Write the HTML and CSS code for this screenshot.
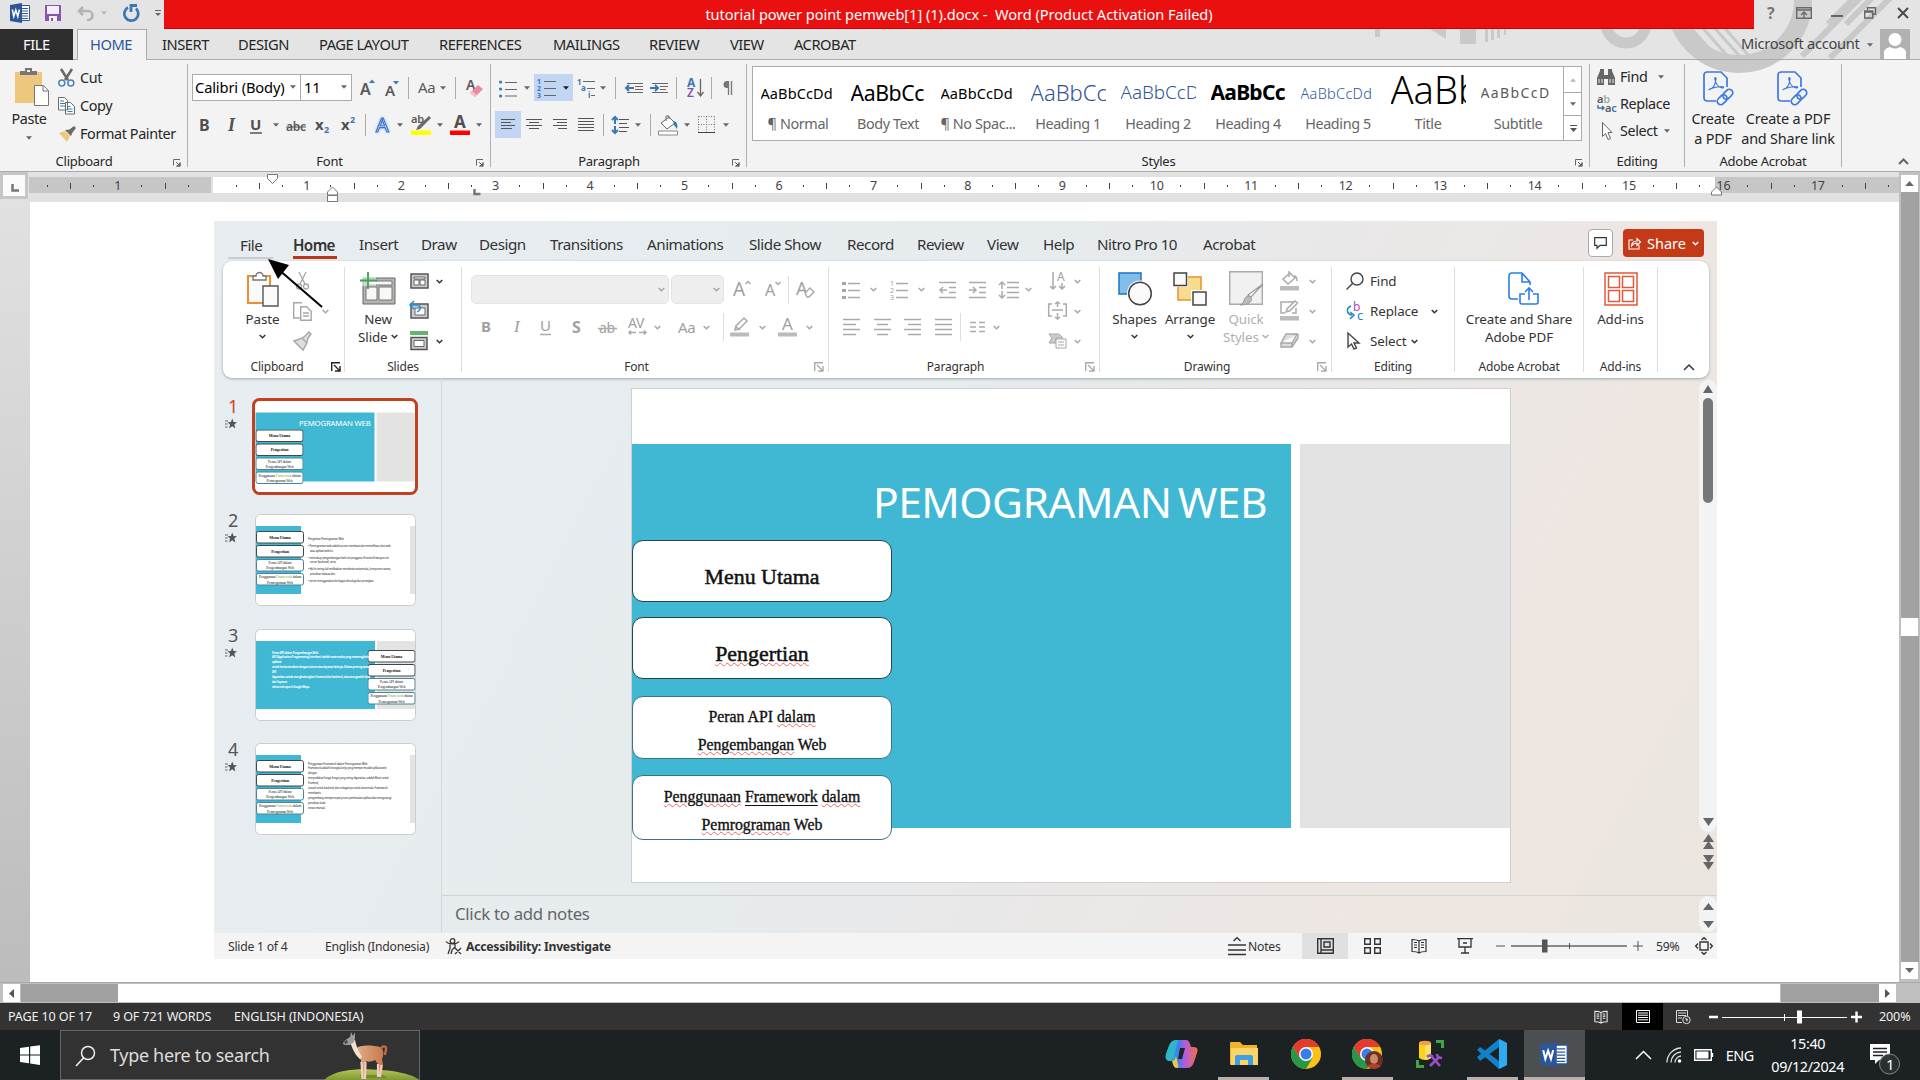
FILE: index.html
```html
<!DOCTYPE html>
<html lang="en">
<head>
<meta charset="utf-8">
<title>tutorial power point pemweb[1] (1).docx - Word</title>
<link rel="stylesheet" href="styles.css">
</head>
<body>
<svg class="defs" width="0" height="0">
  <symbol id="tri" viewBox="0 0 7 4"><path d="M0 0h7L3.5 4z" fill="currentColor"/></symbol>
  <symbol id="chev" viewBox="0 0 7 5"><path d="M.7 1l2.8 2.8L6.300 1" fill="none" stroke="currentColor" stroke-width="1.5"/></symbol>
  <symbol id="launch" viewBox="0 0 8 8"><path d="M.5 6.500V.5H7M3 3l4 4M7 3.500V7H3.500" fill="none" stroke="currentColor"/><path d="M7.500 3v4.500H3z" fill="currentColor"/></symbol>
  <symbol id="plaunch" viewBox="0 0 10 10"><path d="M.7 9V.7H9M3 3l5.500 5.500M9 4v5H4" fill="none" stroke="currentColor" stroke-width="1.400"/></symbol>
  <symbol id="word" viewBox="0 0 20 20"><path d="M10 2.500h9.500v15H10z" fill="#fff" stroke="#2b579a"/><path d="M12 5.500h6M12 8h6M12 10.500h6M12 13h6M12 15.500h6" stroke="#2b579a"/><path d="M0 2l12-2v20L0 18z" fill="#2b579a"/><path d="M2.300 6.500l1.500 7 2-6.500 2 6.500 1.600-7" fill="none" stroke="#fff" stroke-width="1.500"/></symbol>
  <symbol id="pdf" viewBox="0 0 32 36"><g fill="none" stroke="#3b78e0" stroke-width="1.700"><path d="M13 30H4a3 3 0 0 1-3-3V4a3 3 0 0 1 3-3h14l6 6v9"/><path d="M5.500 19c4-1 7-5 7.500-11 .2-2-1.500-2-1.200 0 .7 5 4 8.500 7.700 9 1.500.2 1.500-1.500 0-1.500-5 .2-9 1-13 2.500" stroke-width="1.200"/><g transform="rotate(-45 22 26)"><rect x="12.500" y="22.500" width="11" height="7" rx="3.500"/><rect x="20.500" y="22.500" width="11" height="7" rx="3.500"/></g></g></symbol>
  <symbol id="star" viewBox="0 0 12 12"><path d="M0 3h3M0 6h2.500M0 9h2.500" stroke="#666"/><path d="M7.200.5l1.400 3.600 3.400.2-2.700 2.300 1 3.900-3.100-2.200-3.100 2.200 1-3.900-2.600-2.300 3.400-.2z" fill="#555"/></symbol>
  <symbol id="book" viewBox="0 0 16 16"><path d="M8 3C6 1.500 3.500 1.500 1 1.500v12c2.500 0 5 0 7 1.500 2-1.500 4.500-1.500 7-1.500v-12c-2.500 0-5 0-7 1.500zM8 3v12M3 4.500h3M3 7h3M3 9.500h3M10 4.500h3M10 7h3M10 9.500h3" fill="none" stroke="currentColor" stroke-width="1.200"/></symbol>
  <symbol id="chrome" viewBox="0 0 30 30"><circle cx="15" cy="15" r="15" fill="#fbc116"/><path d="M2 7.500A15 15 0 0 1 28 7.500H15z" fill="#e33b2e"/><path d="M2 7.500A15 15 0 0 0 15 30l6.500-11.200-13-.1z" fill="#279847"/><path d="M2 7.500L8.500 19 15 8h13A15 15 0 0 0 2 7.500z" fill="#e33b2e"/><circle cx="15" cy="15" r="7" fill="#fff"/><circle cx="15" cy="15" r="5.500" fill="#3a7de8"/></symbol>
  <symbol id="menu4" viewBox="0 0 48 55"><g fill="#fff"><rect x=".5" y=".5" width="47" height="11.500" rx="2" stroke="#3b4a50"/><rect x=".5" y="14.500" width="47" height="11.500" rx="2" stroke="#3b4a50"/><rect x=".5" y="28.500" width="47" height="11.500" rx="2" stroke="#4b8494"/><rect x=".5" y="42.500" width="47" height="11.500" rx="2" stroke="#4b8494"/></g><g class="tinyserif" text-anchor="middle"><text x="24" y="7.700" font-weight="bold" font-size="4">Menu Utama</text><text x="24" y="21.500" font-weight="bold" font-size="4">Pengertian</text><text x="24" y="33">Peran API dalam</text><text x="24" y="38.400">Pengembangan Web</text><text x="24" y="47.200">Penggunaan <tspan fill="#7a3">Framework</tspan> dalam</text><text x="24" y="52.600">Pemrograman Web</text></g></symbol>
</svg>

<header class="titlebar">
  <div class="quick">
    <svg width="20" height="20"><use href="#word"/></svg>
    <svg width="16" height="16"><path d="M0 0h16v16H0z" fill="#8655ac"/><path d="M2 1h12v8H2zM4 11h8v5H4z" fill="#f3eefa"/><path d="M6 13h2v3H6z" fill="#8655ac"/></svg>
    <svg width="18" height="15"><path d="M2 5h9a4.500 4.500 0 0 1 0 9h-1M6 1L2 5l4 4" fill="none" stroke="#b3b3b3" stroke-width="2.600"/></svg>
    <svg class="pale" width="6" height="4"><use href="#tri"/></svg>
    <svg width="17" height="18"><path d="M5 3.500A7 7 0 1 0 13 4.500M8 8V1.500h6" fill="none" stroke="#3c77b5" stroke-width="2.800"/></svg>
    <svg width="6" height="6"><path d="M0 .5h6" stroke="#666"/><path d="M0 3h6L3 6z" fill="#666"/></svg>
  </div>
  <div class="caption">tutorial power point pemweb[1] (1).docx -&nbsp; Word (Product Activation Failed)</div>
  <div class="winctl">
    <svg class="pattern" width="550" height="59" viewBox="1370 0 550 59"><g fill="#c9c9c9"><path d="M1375 29h5v8h-5zM1430 29h16v10zM1460 29h16v15h-16zM1485 29h3v13h-3zM1491 29h3v11h-3zM1497 29h3v9h-3zM1504 29h2v6h-2z"/></g><g fill="none" stroke="#c9c9c9"><circle cx="1626" cy="23" r="20" stroke-width="11"/><circle cx="1739" cy="0" r="64" stroke-width="18"/><path d="M1684 20l42 48M1694 18l44 50M1704 16l46 52M1716 18l40 46" stroke-width="3"/><path d="M1828 24l26-26M1846 24l26-26M1802 56l64-64M1830 58l62-62" stroke-width="6"/></g></svg>
    <svg width="8" height="12"><text x="0" y="12" class="qm">?</text></svg>
    <svg width="16" height="12"><path d="M.7.700h14.600v10.600H.7zM1 3h14M8 11V5M5 8l3-3 3 3" fill="none" stroke="#6a6a6a" stroke-width="1.400"/></svg>
    <svg width="12" height="12"><path d="M0 9h12" stroke="#666" stroke-width="2"/></svg>
    <svg width="12" height="12"><path d="M3.500 3V.7h8v6.500H9M.7 4h8v7h-8zM1 5h7" fill="none" stroke="#666" stroke-width="1.400"/></svg>
    <svg width="12" height="12"><path d="M1 1l10 10M11 1L1 11" stroke="#4a4a4a" stroke-width="2"/></svg>
  </div>
</header>

<nav class="tabs">
  <span class="file">FILE</span><span class="on">HOME</span><span>INSERT</span><span>DESIGN</span><span>PAGE LAYOUT</span><span>REFERENCES</span><span>MAILINGS</span><span>REVIEW</span><span>VIEW</span><span>ACROBAT</span>
  <span class="acct">Microsoft account</span><svg class="dd" width="6" height="4"><use href="#tri"/></svg>
  <svg width="30" height="30"><path d="M0 0h30v30H0z" fill="#b1b1b1"/><circle cx="15" cy="10.500" r="6.500" fill="#fff"/><path d="M4 30v-5a8 6 0 0 1 6-7q5 3 10 0a8 6 0 0 1 6 7v5z" fill="#fff"/></svg>
</nav>

<section class="ribbon">
  <div class="grp g-clip">
    <div class="body clip">
      <div class="paste">
        <svg width="34" height="38"><path d="M0 4h27v31H0z" fill="#edc77e"/><path d="M5 7V3h5V0h7v3h5v4z" fill="#777"/><path d="M12 2h3v2h-3z" fill="#eee"/><path d="M19.500 17.500h9l5 5v15h-14zM28 18v5h5" fill="#fff" stroke="#777"/></svg>
        <b>Paste</b><svg class="dd" width="6" height="4"><use href="#tri"/></svg>
      </div>
      <div class="cmds">
        <svg width="17" height="18"><path d="M3 0l7 11M14 0L7 11" stroke="#6a6a6a" stroke-width="2.600"/><g fill="none" stroke="#4a80bd" stroke-width="1.500"><circle cx="3.800" cy="14" r="3"/><circle cx="12.800" cy="14" r="3"/></g></svg><span>Cut</span>
        <svg width="17" height="18"><path d="M.5.500h6l3 3V13h-9zM7.500 5.500h5l4 4V17h-9z" fill="#fff" stroke="#6a6a6a"/><path d="M2 4h4M2 6.500h5M2 9h5M9.500 9.500h3M9.500 12h5M9.500 14.500h5" stroke="#3b77b7"/></svg><span>Copy</span>
        <svg width="18" height="16"><path d="M1 7l6-2 5 5-3 6z" fill="#edc77e"/><path d="M7 4l6 6 1.500-3.500L18 2l-2-2-4.500 3.500z" fill="#6a6a6a"/></svg><span>Format Painter</span>
      </div>
    </div>
    <div class="lab">Clipboard<svg width="8" height="8"><use href="#launch"/></svg></div>
  </div>

  <div class="grp g-font">
    <div class="body">
      <div class="row f1">
        <div class="combo c1"><span>Calibri (Body)</span><svg class="dd" width="6" height="4"><use href="#tri"/></svg></div>
        <div class="combo c2"><span>11</span><svg class="dd" width="6" height="4"><use href="#tri"/></svg></div>
        <svg width="15" height="20"><text x="0" y="17" class="ga" font-size="16">A</text><path d="M9 5l3-3.500L15 5z" fill="#3c77b5"/></svg>
        <svg width="15" height="20"><text x="0" y="18" class="ga" font-size="15">A</text><path d="M8 3l3 3.500L14 3z" fill="#3c77b5"/></svg>
        <i class="sep"></i>
        <svg width="18" height="20"><text x="0" y="15" class="ga light" font-size="15">Aa</text></svg>
        <svg class="dd" width="6" height="4"><use href="#tri"/></svg>
        <i class="sep"></i>
        <svg width="17" height="20"><text x="-1" y="12" class="ga" font-size="14">A</text><path d="M3 15l8-8 5 4-8 8z" fill="#e98a9b"/><path d="M3 15l2-2 5 4-2 2z" fill="#f3c0c8"/></svg>
      </div>
      <div class="row f2">
        <svg width="11" height="20"><text x="0" y="16" class="gb" font-size="16">B</text></svg>
        <svg width="11" height="20"><text x="1" y="16" class="gi" font-size="18">I</text></svg>
        <svg width="12" height="20"><text x="0" y="15" class="gb" font-size="15">U</text><path d="M0 18h12" stroke="#555" stroke-width="1.500"/></svg>
        <svg class="dd" width="6" height="4"><use href="#tri"/></svg>
        <svg width="20" height="20"><text x="0" y="16" class="ga" font-size="12">abc</text><path d="M0 12h20" stroke="#555"/></svg>
        <svg width="15" height="20"><text x="0" y="15" class="gb" font-size="15">x</text><text x="9" y="18" font-size="9" class="gblue">2</text></svg>
        <svg width="15" height="20"><text x="0" y="15" class="gb" font-size="15">x</text><text x="9" y="8" font-size="9" class="gblue">2</text></svg>
        <i class="sep"></i>
        <svg width="17" height="20"><text x="1" y="17" font-size="20" class="glow">A</text></svg>
        <svg class="dd" width="6" height="4"><use href="#tri"/></svg>
        <svg width="21" height="20"><text x="0" y="8" class="ga" font-size="11">ab</text><path d="M18 1l2 2-11 11-4 1 2-4z" fill="#6a6a6a"/><path d="M0 15.500h20v4.500H0z" fill="#ff0"/></svg>
        <svg class="dd" width="6" height="4"><use href="#tri"/></svg>
        <svg width="20" height="20"><text x="4" y="13" class="gb" font-size="17">A</text><path d="M0 15.500h20v4.500H0z" fill="#f00"/></svg>
        <svg class="dd" width="6" height="4"><use href="#tri"/></svg>
      </div>
    </div>
    <div class="lab">Font<svg width="8" height="8"><use href="#launch"/></svg></div>
  </div>

  <div class="grp g-para">
    <div class="body">
      <div class="row p1">
        <svg width="18" height="18"><path d="M6 3.500h12M6 10.500h12M6 17h12" stroke="#666"/><g fill="#3c77b5"><circle cx="1.600" cy="3" r="1.600"/><circle cx="1.600" cy="10" r="1.600"/><circle cx="1.600" cy="17" r="1.600"/></g></svg>
        <svg class="dd" width="6" height="4"><use href="#tri"/></svg>
        <div class="hl num"><svg width="19" height="18"><path d="M7 2.500h12M7 9.500h12M7 16.500h12" stroke="#666"/><g class="gblue" font-size="7"><text x="0" y="5">1</text><text x="0" y="12">2</text><text x="0" y="19">3</text></g></svg><svg class="dd dark" width="6" height="4"><use href="#tri"/></svg></div>
        <svg width="18" height="18"><path d="M6 2.500h12M10 9.500h8M14 16.500h4" stroke="#666"/><g class="gblue" font-size="8"><text x="0" y="6">1</text><text x="4" y="12">a</text><text x="11" y="19">i</text></g></svg>
        <svg class="dd" width="6" height="4"><use href="#tri"/></svg>
        <i class="sep"></i>
        <svg width="18" height="18"><path d="M2 4.500h16M10 7.500h8M10 10.500h8M2 13.500h16" stroke="#666"/><path d="M9 9H1M4 6L1 9l3 3" stroke="#3c77b5" stroke-width="2" fill="none"/></svg>
        <svg width="18" height="18"><path d="M2 4.500h16M10 7.500h8M10 10.500h6M2 13.500h16" stroke="#666"/><path d="M0 9h8M5 6l3 3-3 3" stroke="#3c77b5" stroke-width="2" fill="none"/></svg>
        <i class="sep"></i>
        <svg width="17" height="20"><text x="0" y="9" class="gblue" font-size="12">A</text><text x="0" y="19" font-size="12" class="gpurple">Z</text><path d="M13.500 1v17M10.500 14l3 4 3-4" fill="none" stroke="#666" stroke-width="1.300"/></svg>
        <i class="sep"></i>
        <svg width="12" height="18"><path d="M12 2H5a3.500 3.500 0 0 0 0 7h1V2z" fill="#777"/><path d="M6.500 2v14M9.500 2v14" stroke="#777" stroke-width="1.300"/></svg>
      </div>
      <div class="row p2">
        <div class="hl al"><svg width="14" height="12"><path d="M0 .5h14M0 3.500h10M0 6.500h14M0 9.500h11" stroke="#555"/></svg></div>
        <svg width="16" height="12"><path d="M0 .5h16M3 3.500h10M0 6.500h16M3 9.500h10" stroke="#555"/></svg>
        <svg width="14" height="12"><path d="M0 .5h14M4 3.500h10M0 6.500h14M5 9.500h9" stroke="#555"/></svg>
        <svg width="16" height="12"><path d="M0 -.5h16M0 2.500h16M0 5.500h16M0 8.500h16M0 11.500h16" stroke="#555"/></svg>
        <i class="sep"></i>
        <svg width="17" height="18"><path d="M7 3.500h10M7 7.500h8M7 11.500h10M7 15.500h8" stroke="#555"/><path d="M3 1v7M0 4l3-3 3 3M3 10v7M0 14l3 3 3-3" stroke="#3c77b5" stroke-width="2" fill="none"/></svg>
        <svg class="dd" width="6" height="4"><use href="#tri"/></svg>
        <i class="sep"></i>
        <svg width="21" height="20"><path d="M3 8l8-6 6 6-8 6zM8 6V1h3v3" fill="#fff" stroke="#666"/><path d="M15 6c4 0 5 4 4 8l-3-4z" fill="#3c77b5"/><path d="M.5 16h19v4H.5z" fill="#fff" stroke="#888"/></svg>
        <svg class="dd" width="6" height="4"><use href="#tri"/></svg>
        <svg width="17" height="17"><path d="M.5.500h16M.5.500v16M16.500.5v16M8.500.5v16M.5 8.500h16" stroke="#777" stroke-dasharray="1 1.500"/><path d="M0 16.500h17" stroke="#444"/></svg>
        <svg class="dd" width="6" height="4"><use href="#tri"/></svg>
      </div>
    </div>
    <div class="lab">Paragraph<svg width="8" height="8"><use href="#launch"/></svg></div>
  </div>

  <div class="grp g-styles">
    <div class="gallery">
      <div><em class="s-n">AaBbCcDd</em><span>¶ Normal</span></div>
      <div><em class="s-b">AaBbCc</em><span>Body Text</span></div>
      <div><em class="s-n">AaBbCcDd</em><span>¶ No Spac...</span></div>
      <div><em class="s-h1">AaBbCc</em><span>Heading 1</span></div>
      <div><em class="s-h2">AaBbCcD</em><span>Heading 2</span></div>
      <div><em class="s-h4">AaBbCc</em><span>Heading 4</span></div>
      <div><em class="s-h5">AaBbCcDd</em><span>Heading 5</span></div>
      <div><em class="s-t">AaBb</em><span>Title</span></div>
      <div><em class="s-s">AaBbCcD</em><span>Subtitle</span></div>
      <div class="gscroll"><i><svg class="pale flip" width="6" height="4"><use href="#tri"/></svg></i><i><svg class="dd" width="6" height="4"><use href="#tri"/></svg></i><i><svg width="7" height="7"><path d="M0 .5h7" stroke="#555"/><path d="M0 3h7L3.500 7z" fill="#555"/></svg></i></div>
    </div>
    <div class="lab">Styles<svg width="8" height="8"><use href="#launch"/></svg></div>
  </div>

  <div class="grp g-edit">
    <div class="body edit">
      <svg width="18" height="16"><path d="M0 16V9l3-7h4v14zM18 16V9l-3-7h-4v14zM7 6h4v4H7zM3 0h4v2H3zM11 0h4v2h-4z" fill="#666"/><path d="M2 10v4M5 10v4M13 10v4M16 10v4" stroke="#eee"/></svg><span>Find</span><svg class="dd mv" width="6" height="4"><use href="#tri"/></svg>
      <svg width="20" height="18"><text x="0" y="8" class="ga" font-size="11">a<tspan fill="#aaa">b</tspan></text><text x="8" y="17" class="ga" font-size="11">a<tspan fill="#3c77b5">c</tspan></text><path d="M1 10v3h6M5 11l2 2-2 2" fill="none" stroke="#3c77b5" stroke-width="1.500"/></svg><span>Replace</span><i></i>
      <svg class="cur" width="11" height="18"><path d="M.5.500v14l3-3 2.500 6 2.500-1-2.500-6h4z" fill="#fff" stroke="#666"/></svg><span>Select</span><svg class="dd mv2" width="6" height="4"><use href="#tri"/></svg>
    </div>
    <div class="lab">Editing</div>
  </div>
  <div class="grp g-adobe">
    <div class="body adobe">
      <div><svg width="32" height="36"><use href="#pdf"/></svg><b>Create<br>a PDF</b></div>
      <div><svg width="32" height="36"><use href="#pdf"/></svg><b>Create a PDF<br>and Share link</b></div>
    </div>
    <div class="lab">Adobe Acrobat</div>
  </div>
  <svg class="collapse" width="11" height="7"><path d="M1 6l4.500-4.500L10 6" fill="none" stroke="#666" stroke-width="2"/></svg>
</section>

<div class="work">
  <div class="left">
    <div class="ruler">
      <div class="corner"><i><svg width="8" height="8"><path d="M1.500 0v6.500H8" fill="none" stroke="#777" stroke-width="2.500"/></svg></i></div>
      <div class="strip"><u></u><s></s><s>1</s><s></s><s>1</s><s>2</s><s>3</s><s>4</s><s>5</s><s>6</s><s>7</s><s>8</s><s>9</s><s>10</s><s>11</s><s>12</s><s>13</s><s>14</s><s>15</s><s>16</s><s>17</s><s class="last"></s></div>
      <svg class="marks" width="1899" height="30"><g fill="#fff" stroke="#777"><path d="M267.500 2.500h10v4l-5 5-5-5zM327.500 23v-3l5-5 5 5v3zM327.500 23.500h10v6h-10zM1711.500 23v-3l5-5 5 5v3z"/></g><path d="M474.500 17v5h6" fill="none" stroke="#777" stroke-width="2.500"/></svg>
    </div>
    <div class="canvas">
      <main class="page">
        <div class="ppt">
          <div class="ptabs">
            <span>File</span><span class="on">Home</span><span>Insert</span><span>Draw</span><span>Design</span><span>Transitions</span><span>Animations</span><span>Slide Show</span><span>Record</span><span>Review</span><span>View</span><span>Help</span><span>Nitro Pro 10</span><span>Acrobat</span>
            <div class="comment"><svg width="13" height="12"><path d="M.7.700h11.600v7.600H6l-3 3v-3H.7z" fill="none" stroke="#333" stroke-width="1.200"/></svg></div>
            <div class="share"><svg width="13" height="13"><path d="M5 3H1v9h10V8M3.500 9c0-3 2-5 5.500-5V1.500L12.500 5 9 8.500V6C6.500 6 5 7 3.500 9z" fill="none" stroke="#fff" stroke-width="1.100"/></svg><span>Share</span><svg width="7" height="5"><use href="#chev"/></svg></div>
          </div>
          <div class="pribbon">
            <div class="pg">
              <div class="pbody pclip">
                <div class="big"><i><svg width="34" height="36"><path d="M2 5h22v27H2z" fill="#fafafa" stroke="#ef8f2f" stroke-width="2"/><path d="M7 9V5h3a3.500 3.500 0 0 1 7 0h3v4z" fill="#fff" stroke="#777" stroke-width="1.400"/><path d="M17 15h15v20H17z" fill="#fafafa" stroke="#555" stroke-width="1.400"/></svg></i><b>Paste</b><svg width="7" height="5"><use href="#chev"/></svg></div>
                <div class="rows soft">
                  <svg width="18" height="18"><path d="M6 0l6 12M13 0L7 12" stroke="currentColor" stroke-width="1.300"/><g fill="none" stroke="currentColor" stroke-width="1.300"><circle cx="6" cy="14.500" r="2.500"/><circle cx="13" cy="14.500" r="2.500"/></g></svg><i></i>
                  <svg width="19" height="19"><path d="M7 16H.7V.7H9M7.700 4.700h6l4.500 4.500v9H7.700zM10 11h6M10 14h6" fill="none" stroke="currentColor" stroke-width="1.400"/></svg><svg width="7" height="5"><use href="#chev"/></svg>
                  <svg width="19" height="18"><path d="M1 9l8-3 5 5-4 7zM9 6l3-2 4-4 2 2-3 4-1 4" fill="#ddd" stroke="currentColor" stroke-width="1.400"/></svg>
                </div>
              </div>
              <div class="plab">Clipboard<svg class="k" width="10" height="10"><use href="#plaunch"/></svg></div>
            </div>
            <div class="pg">
              <div class="pbody pslides">
                <div class="big"><i><svg width="36" height="34"><path d="M3 6h32v26H3z" fill="#b5b5b0" stroke="#666"/><path d="M6 9h26v4H6zM6 15h11v13H6zM19 15h13v13H19z" fill="#f8f8f8" stroke="#777"/><path d="M0 0h16v14H0z" fill="#fff" opacity=".5"/><path d="M8 0v17M0 8.500h17" stroke="#3aa653" stroke-width="1.800"/></svg></i><b>New<br>Slide&nbsp;<svg width="7" height="5"><use href="#chev"/></svg></b></div>
                <div class="rows">
                  <svg width="19" height="16"><path d="M1 1h17v14H1z" fill="#ccc" stroke="#555" stroke-width="1.500"/><path d="M4 4h11v2H4zM4 7h5v5H4zM10 7h5v5h-5z" fill="#fff" stroke="#666"/></svg><svg width="7" height="5"><use href="#chev"/></svg>
                  <svg width="19" height="16"><path d="M1 1h17v14H1z" fill="#ccc" stroke="#555" stroke-width="1.500"/><path d="M5 5h10v7H5z" fill="#fff" stroke="#666"/><path d="M1 2h7c4 2 2 6-1 7M4-2L0 2l4 4" fill="none" stroke="#2a90d9" stroke-width="1.600"/></svg><i></i>
                  <svg width="19" height="20"><path d="M0 0h18v4H0z" fill="#63b56e"/><path d="M1 6.500h16v12H1z" fill="#ccc" stroke="#555" stroke-width="1.500"/><path d="M4 9.500h10v6H4z" fill="#fff" stroke="#666"/></svg><svg width="7" height="5"><use href="#chev"/></svg>
                </div>
              </div>
              <div class="plab">Slides</div>
            </div>
            <div class="pg">
              <div class="pbody soft">
                <div class="row pf1">
                  <div class="pc"><svg width="7" height="5"><use href="#chev"/></svg></div>
                  <div class="pc w53"><svg width="7" height="5"><use href="#chev"/></svg></div>
                  <svg width="18" height="20"><text x="0" y="16" class="pa" font-size="19">A</text><path d="M12.500 4L15 1.500 17.500 4" class="ln"/></svg>
                  <svg width="16" height="20"><text x="0" y="16" class="pa" font-size="16">A</text><path d="M10.500 2L13 4.500 15.500 2" class="ln"/></svg>
                  <i class="psep"></i>
                  <svg width="18" height="20"><text x="0" y="15" class="pa" font-size="18">A</text><path d="M9 13l5-5 4 4-5 5h-2z" fill="#fff" stroke="currentColor" stroke-width="1.400"/></svg>
                </div>
                <div class="row pf2">
                  <svg width="10" height="20"><text x="0" y="15" class="pa" font-size="15" font-weight="bold">B</text></svg>
                  <svg width="10" height="20"><text x="1" y="15" class="gi pi" font-size="17">I</text></svg>
                  <svg width="11" height="20"><text x="0" y="14" class="pa" font-size="15">U</text><path d="M0 17.500h11" class="ln"/></svg>
                  <svg width="10" height="20"><text x="0" y="16" class="pa" font-size="16" font-weight="bold">S</text></svg>
                  <svg width="19" height="20"><text x="1" y="16" class="pa" font-size="14">ab</text><path d="M0 11.500h19" class="ln"/></svg>
                  <svg width="20" height="20"><text x="0" y="11" class="pa" font-size="14">AV</text><path d="M1 15.500h7M11 15.500h7M3 13.500l-2 2 2 2M16 13.500l2 2-2 2" class="ln"/></svg>
                  <svg width="7" height="5"><use href="#chev"/></svg>
                  <svg width="19" height="20"><text x="0" y="16" class="pa" font-size="15">Aa</text></svg>
                  <svg width="7" height="5"><use href="#chev"/></svg>
                  <i class="psep"></i>
                  <svg width="20" height="20"><path d="M0 15.500h19v4H0z" fill="#bbb"/><path d="M5 13l1-4 8-8 3 3-8 8zM5 9l5 4" class="ln"/></svg>
                  <svg width="7" height="5"><use href="#chev"/></svg>
                  <svg width="20" height="20"><path d="M0 15.500h19v4H0z" fill="#bbb"/><text x="4" y="13" class="pa" font-size="17">A</text></svg>
                  <svg width="7" height="5"><use href="#chev"/></svg>
                </div>
              </div>
              <div class="plab sh">Font<svg width="10" height="10"><use href="#plaunch"/></svg></div>
            </div>
            <div class="pg">
              <div class="pbody soft ppara">
                <div>
                  <div class="row pp1">
                    <svg width="18" height="18"><path d="M6 2.500h12M6 9.500h12M6 16.500h12" class="ln"/><path d="M0 1h4v3H0zM0 8h4v3H0zM0 15h4v3H0z" fill="currentColor"/></svg>
                    <svg width="7" height="5"><use href="#chev"/></svg>
                    <svg width="18" height="18"><path d="M6 2.500h12M6 9.500h12M6 16.500h12" class="ln"/><g class="pa" font-size="7"><text x="0" y="5">1</text><text x="0" y="12">2</text><text x="0" y="19">3</text></g></svg>
                    <svg width="7" height="5"><use href="#chev"/></svg>
                    <svg width="18" height="16"><path d="M0 .5h17M10 5.500h7M10 10.500h7M0 15.500h17M8 8H1M4 5L1 8l3 3" class="ln"/></svg>
                    <svg width="18" height="16"><path d="M0 .5h17M10 5.500h7M10 10.500h7M0 15.500h17M0 8h7M4 5l3 3-3 3" class="ln"/></svg>
                    <svg width="20" height="16"><path d="M8 .5h12M8 5.500h12M8 10.500h12M8 15.500h12M3 0v7M0 3l3-3 3 3M3 9v7M0 13l3 3 3-3" class="ln"/></svg>
                    <svg width="7" height="5"><use href="#chev"/></svg>
                  </div>
                  <div class="row pp2">
                    <svg width="18" height="16"><path d="M0 .5h17M0 5.500h13M0 10.500h17M0 15.500h13" class="ln"/></svg>
                    <svg width="18" height="16"><path d="M0 .5h17M3 5.500h11M0 10.500h17M3 15.500h11" class="ln"/></svg>
                    <svg width="18" height="16"><path d="M0 .5h17M4 5.500h13M0 10.500h17M4 15.500h13" class="ln"/></svg>
                    <svg width="18" height="16"><path d="M0 .5h17M0 5.500h17M0 10.500h17M0 15.500h17" class="ln"/></svg>
                    <i class="psep"></i>
                    <svg width="16" height="12"><path d="M0 1.500h6M9 1.500h6M0 6h6M9 6h6M0 10.500h6M9 10.500h6" class="ln"/></svg>
                    <svg width="7" height="5"><use href="#chev"/></svg>
                  </div>
                </div>
                <div class="rows">
                  <svg width="18" height="20"><path d="M5 1v17M2 15l3 3 3-3M14 12v6M11 15l3 3 3-3" class="ln"/><text x="9" y="10" class="pa" font-size="12">A</text></svg><svg width="7" height="5"><use href="#chev"/></svg>
                  <svg width="19" height="18"><path d="M4 2H.7v12H4M15 2h3.300v12H15M4 8h11M9.500 0v5M7 2l2.500-2L12 2M9.500 11v6M7 15l2.500 2 2.500-2" class="ln"/></svg><svg width="7" height="5"><use href="#chev"/></svg>
                  <svg width="19" height="16"><path d="M1 1h10l4 4H8v5H1l3-5z" fill="#ccc" stroke="currentColor"/><path d="M8 6h10v9H8zM10 9h6M10 12h6" fill="#fff" stroke="currentColor"/></svg><svg width="7" height="5"><use href="#chev"/></svg>
                </div>
              </div>
              <div class="plab sh">Paragraph<svg width="10" height="10"><use href="#plaunch"/></svg></div>
            </div>
            <div class="pg">
              <div class="pbody pdraw">
                <div class="big"><i><svg width="34" height="34"><path d="M1 1h22v21H1z" fill="#83bdec" stroke="#1c73be" stroke-width="1.500"/><circle cx="22" cy="21.500" r="13" fill="#fff"/><circle cx="22" cy="21.500" r="11.300" fill="#fafafa" stroke="#444" stroke-width="1.500"/></svg></i><b>Shapes</b><svg width="7" height="5"><use href="#chev"/></svg></div>
                <div class="big"><i><svg width="34" height="34"><path d="M5 5h23v23H5z" fill="#f8dc8d" stroke="#ef8f2f" stroke-width="1.500"/><path d="M0 0h15v15H0zM18 18h16v16H18z" fill="#fff"/><path d="M1 1h12.500v12.500H1zM20 20h13v13H20z" fill="#fafafa" stroke="#444" stroke-width="1.500"/></svg></i><b>Arrange</b><svg width="7" height="5"><use href="#chev"/></svg></div>
                <div class="big soft"><i><svg width="35" height="36"><path d="M.7.700h32.600v32.600H.7z" fill="#f1f1f1" stroke="#aaa" stroke-width="1.400"/><path d="M34 13L22 26l-3-2z" fill="#fff" stroke="#999" stroke-width="1.200"/><path d="M11 34c5-1 3-9 9-9 5 2 3 9-9 9z" fill="#bbb" stroke="#999"/></svg></i><b>Quick<br>Styles&nbsp;<svg width="7" height="5"><use href="#chev"/></svg></b></div>
                <div class="rows soft">
                  <svg width="19" height="20"><path d="M0 15h19v4.500H0z" fill="#bbb"/><path d="M3 8l7-6 5 5-7 6zM9 0v6M14 5c3 0 3 3 3 5" class="ln"/></svg><svg width="7" height="5"><use href="#chev"/></svg>
                  <svg width="19" height="20"><path d="M0 15h19v4.500H0z" fill="#bbb"/><path d="M14 1H1v11h4M16 7v5h-4M6 11l1-3 8-8 2.500 2-8 8z" class="ln"/></svg><svg width="7" height="5"><use href="#chev"/></svg>
                  <svg width="19" height="16"><path d="M6 1h11l-5 9H1zM1 10v4h11l6-9V1M12 10v4" fill="#ddd" stroke="currentColor" stroke-width="1.400"/></svg><svg width="7" height="5"><use href="#chev"/></svg>
                </div>
              </div>
              <div class="plab sh">Drawing<svg width="10" height="10"><use href="#plaunch"/></svg></div>
            </div>
            <div class="pg">
              <div class="pbody pedit">
                <svg width="18" height="18"><circle cx="11" cy="7" r="6" fill="#fafafa" stroke="#444" stroke-width="1.400"/><path d="M6.500 11.500L.5 17.500" stroke="#444" stroke-width="1.500"/></svg><span>Find</span><i></i>
                <svg width="18" height="20"><text x="7" y="10" font-size="12" fill="#b146c2">b</text><text x="11" y="19" font-size="13" fill="#1a86c8">c</text><path d="M5 5c-5 2-5 8 1 9M4 11l4 3-4 4" fill="none" stroke="#1a86c8" stroke-width="1.500"/></svg><span>Replace</span><svg class="m1" width="7" height="5"><use href="#chev"/></svg>
                <svg width="18" height="18"><path d="M2 1v14l3.500-3 2.500 5 2.500-1L8 11h5z" fill="#fafafa" stroke="#444" stroke-width="1.400"/></svg><span>Select</span><svg class="m2" width="7" height="5"><use href="#chev"/></svg>
              </div>
              <div class="plab">Editing</div>
            </div>
            <div class="pg">
              <div class="pbody"><div class="big"><i class="off"><svg width="32" height="34"><g fill="none" stroke="#2b7de9" stroke-width="1.600"><path d="M10 27H4a3 3 0 0 1-3-3V4a3 3 0 0 1 3-3h10l8 9v3M14 1v9h8"/><path d="M17 22h-5v8a2 2 0 0 0 2 2h14a2 2 0 0 0 2-2v-8h-5M21 28V16M17 20l4-4 4 4"/></g></svg></i><b>Create and Share<br>Adobe PDF</b></div></div>
              <div class="plab">Adobe Acrobat</div>
            </div>
            <div class="pg">
              <div class="pbody"><div class="big"><i><svg width="34" height="34"><path d="M1 1h32v32H1zM4.500 4.500h11v11h-11zM18.500 4.500h11v11h-11zM4.500 18.500h11v11h-11zM18.500 18.500h11v11h-11z" fill="none" stroke="#e2593a" stroke-width="1.500"/></svg></i><b>Add-ins</b></div></div>
              <div class="plab">Add-ins</div>
            </div>
            <svg class="pcollapse" width="12" height="8"><path d="M1 7l5-5 5 5" fill="none" stroke="#333" stroke-width="1.500"/></svg>
          </div>
          <div class="pmain">
            <aside class="thumbs">
              <div class="tn cur"><p>1<svg width="12" height="12"><use href="#star"/></svg></p>
                <svg class="th" width="166" height="97" viewBox="-3.500 -3.500 166 97"><rect x="-2" y="-2" width="163" height="94" rx="6" fill="#fff" stroke="#c0401f" stroke-width="3"/><path d="M0 11h119v69H0z" fill="#40b8d3"/><path d="M121 11h38v69h-38z" fill="#e3e3e3"/><text x="115" y="24" text-anchor="end" font-size="7.800" fill="#fff">PEMOGRAMAN WEB</text><svg x="0" y="28" width="48" height="55"><use href="#menu4"/></svg></svg></div>
              <div class="tn"><p>2<svg width="12" height="12"><use href="#star"/></svg></p>
                <svg class="th" width="161" height="92" viewBox="-1 -1 161 92"><rect x="-.5" y="-.5" width="160" height="91" rx="5" fill="#fff" stroke="#ccc"/><path d="M0 11h45v68H0z" fill="#40b8d3"/><path d="M154 11h5v68h-5z" fill="#e3e3e3"/><svg x="0" y="16" width="48" height="55"><use href="#menu4"/></svg><g class="tiny"><text x="52" y="24.500">Pengertian Pemrograman Web</text><text x="52" y="31.500">• Pemrograman web adalah proses membuat dan memelihara situs web</text><text x="54" y="36.500">atau aplikasi web ini.</text><text x="52" y="43.500">• mencakup pengembangan baik sisi pengguna (frontend) maupun sisi</text><text x="54" y="48">server (backend), serta</text><text x="52" y="55">• Hal ini sering kali melibatkan mendesain antarmuka, komponen utama,</text><text x="54" y="59.500">penulisan bahasa dan</text><text x="52" y="67">• server menggunakan berbagai teknologi dan perangkat.</text></g></svg></div>
              <div class="tn"><p>3<svg width="12" height="12"><use href="#star"/></svg></p>
                <svg class="th" width="161" height="92" viewBox="-1 -1 161 92"><rect x="-.5" y="-.5" width="160" height="91" rx="5" fill="#fff" stroke="#ccc"/><path d="M0 11h119v68H0z" fill="#40b8d3"/><path d="M121 11h38v68h-38z" fill="#e3e3e3"/><svg x="111.500" y="20" width="48" height="55"><use href="#menu4"/></svg><g class="tiny wh"><text x="16" y="24">Peran API dalam Pengembangan Web</text><text x="16" y="28">API (Application Programming Interface) adalah antarmuka yang memungkinkan</text><text x="16" y="32.500">aplikasi</text><text x="16" y="38">untuk berkomunikasi dengan sistem atau layanan lainnya. Dalam pemrograman web,</text><text x="16" y="43">API</text><text x="16" y="48">digunakan untuk menghubungkan frontend dan backend, atau mengambil data</text><text x="16" y="53">dari layanan</text><text x="16" y="58">eksternal seperti Google Maps.</text></g></svg></div>
              <div class="tn"><p>4<svg width="12" height="12"><use href="#star"/></svg></p>
                <svg class="th" width="161" height="92" viewBox="-1 -1 161 92"><rect x="-.5" y="-.5" width="160" height="91" rx="5" fill="#fff" stroke="#ccc"/><path d="M0 11h45v68H0z" fill="#40b8d3"/><path d="M154 11h5v68h-5z" fill="#e3e3e3"/><svg x="0" y="16" width="48" height="55"><use href="#menu4"/></svg><g class="tiny"><text x="52" y="21">Penggunaan Framework dalam Pemrograman Web</text><text x="52" y="25">Framework adalah kerangka kerja yang mempermudah aplikasi web</text><text x="52" y="29.500">dengan</text><text x="52" y="35">menyediakan fungsi-fungsi yang sering digunakan, adalah React untuk</text><text x="52" y="40">frontend,</text><text x="52" y="45">Laravel untuk backend, dan sebagainya untuk antarmuka. Framework</text><text x="52" y="50">membantu</text><text x="52" y="55">pengembang mempercepat proses pembuatan aplikasi dan mengurangi</text><text x="52" y="60">penulisan kode</text><text x="52" y="65">secara manual.</text></g></svg></div>
            </aside>
            <div class="stage">
              <div class="slidewrap">
                <div class="slide">
                  <div class="teal">
                    <h1>PEMOGRAMAN WEB</h1>
                    <div class="card dk">Menu Utama</div>
                    <div class="card dk"><q>Pengertian</q></div>
                    <div class="card sm">Peran API <q>dalam</q><br><q>Pengembangan</q> Web</div>
                    <div class="card sm last"><q>Penggunaan</q> <u>Framework</u> <q>dalam</q><br><q>Pemrograman</q> Web</div>
                  </div>
                  <div class="grey"></div>
                </div>
                <div class="vs"><svg width="18" height="500"><path d="M0 9a9 9 0 0 1 18 0v434a9 9 0 0 1-18 0z" fill="#f3f3f3"/><path d="M4 13l5-8 5 8z" fill="#666"/><rect x="4" y="18" width="10" height="105" rx="5" fill="#777"/><path d="M4 438h11l-5.500 8zM9.500 454l5.500 8H4zM9.500 461l5.500 8H4zM4 475h11l-5.500 8zM4 482h11l-5.500 8z" fill="#666"/></svg></div>
              </div>
              <div class="notes">Click to add notes<svg width="18" height="37"><rect width="18" height="36" rx="9" fill="#f3f3f3"/><path d="M4 14l5.500-7 5.500 7zM4 25h11l-5.500 7z" fill="#666"/></svg></div>
            </div>
          </div>
          <div class="pstatus">
            <span>Slide 1 of 4</span><span>English (Indonesia)</span>
            <svg width="17" height="17"><g fill="none" stroke="#333" stroke-width="1.300"><circle cx="7.500" cy="3" r="2.300"/><path d="M1 3.500c2 3 11 3 13 0M5 6.500v4L3 16M10 6v3l-3 3-1 4M10 10l6 6M16 10l-6 6"/></g></svg><b>Accessibility: Investigate</b>
            <svg width="20" height="18"><path d="M1 8h18M1 13h18M1 17.500h18M6.500 4L10 .7 13.500 4" fill="none" stroke="#333" stroke-width="1.400"/></svg><span>Notes</span>
            <i class="view"><svg width="17" height="16"><path d="M.7.700h15.600v14.600H.7zM4 1v14M4 12h12M7 4h6v5H7z" fill="none" stroke="#333" stroke-width="1.400"/></svg></i>
            <svg width="17" height="16"><path d="M.7.700h5.600v5.600H.7zM10.700.7h5.600v5.600h-5.600zM.7 9.700h5.600v5.600H.7zM10.700 9.700h5.600v5.600h-5.600z" fill="none" stroke="#333" stroke-width="1.400"/></svg>
            <svg width="16" height="16"><use href="#book"/></svg>
            <svg width="17" height="16"><path d="M0 .7h16M2 1v8h12V1M8 9v6M4 15h8M6 5h4" fill="none" stroke="#333" stroke-width="1.300"/></svg>
            <svg width="148" height="16"><path d="M0 8h9M137 8h10M142 3v10" stroke="#555"/><path d="M15 8h116" stroke="#666" stroke-width="1.500"/><path d="M73.500 5v6" stroke="#555"/><path d="M46 1.500h5.500v13H46z" fill="#555"/></svg>
            <span>59%</span>
            <svg width="18" height="18"><path d="M5 5h8v8H5zM6.500 3L9 .7 11.500 3M6.500 15L9 17.300 11.500 15M3 6.500L.7 9 3 11.500M15 6.500L17.300 9 15 11.500" fill="none" stroke="#333" stroke-width="1.400"/></svg>
          </div>
          <svg class="pointer" width="56" height="50"><path d="M54 48L10 10" stroke="#000" stroke-width="2"/><path d="M0 0l21 6-11 14z"/></svg>
        </div>
      </main>
    </div>
  </div>
  <div class="vscroll"><i class="btn"><svg class="flip" width="9" height="5"><use href="#tri"/></svg></i><i class="trk"></i><i class="thumb"></i><i class="trk2"></i><i class="btn"><svg width="9" height="5"><use href="#tri"/></svg></i></div>
</div>
<div class="hscroll"><i class="btn"><svg width="5" height="9"><path d="M5 0v9L0 4.500z" fill="#555"/></svg></i><i class="t1"></i><i class="thumb"></i><i class="t2"></i><i class="btn"><svg width="5" height="9"><path d="M0 0v9l5-4.500z" fill="#555"/></svg></i></div>

<footer class="status">
  <span>PAGE 10 OF 17</span><span>9 OF 721 WORDS</span><span>ENGLISH (INDONESIA)</span>
  <svg width="14" height="14"><use href="#book"/></svg>
  <i class="view"><svg width="14" height="13"><path d="M.5.500h13v12H.5zM2 3h10M2 5.200h10M2 7.500h10M2 9.800h10" fill="none" stroke="#fff"/></svg></i>
  <svg width="15" height="14"><path d="M6 12.500H.5V.5h11V6M2 3h8M2 5.500h8M2 8h4" fill="none" stroke="#ddd"/><circle cx="10.500" cy="10" r="3.700" fill="#333" stroke="#ddd"/><path d="M9 8l3 1-1 3z" fill="#ddd"/></svg>
  <svg width="154" height="14"><path d="M0 7h9M142 7h11M147.500 1.500v11" stroke="#fff" stroke-width="2.400"/><path d="M13 7.500h125M75.500 4v7" stroke="#fff"/><path d="M88 .5h5v13h-5z" fill="#fff"/></svg>
  <span>200%</span>
</footer>

<footer class="taskbar">
  <svg width="20" height="20"><path d="M0 3l9-1.200V9.500H0zM10.200 1.600L20 .2v9.300h-9.800zM0 10.600h9v7.700L0 17zM10.200 10.600H20V20l-9.800-1.400z" fill="#fff"/></svg>
  <div class="search">
    <svg width="21" height="22"><circle cx="13" cy="8" r="6.500" fill="none" stroke="#eee" stroke-width="1.500"/><path d="M8.500 13L1 21" stroke="#eee" stroke-width="1.600"/></svg>
    <span>Type here to search</span>
    <svg width="96" height="49" viewBox="0 0 96 49"><defs><linearGradient id="hill" x2="0" y2="1"><stop stop-color="#b5c455"/><stop offset="1" stop-color="#7f9a35"/></linearGradient><linearGradient id="fur" x2="1"><stop stop-color="#e3b58f"/><stop offset="1" stop-color="#c77a4d"/></linearGradient></defs><path d="M0 49C12 38 34 38 48 38.500c22 .5 42 5 47 10.500z" fill="url(#hill)"/><path d="M35 44h24l4 3H38z" fill="#5f7426" opacity=".6"/><path d="M28 9c3 5 3 10 6 7 6-2 14-2 22 0 4 2 4 8 2 12l1 6-2 12h-3l0-13-3-4c-4 2-7 2-9 1l-1 17h-3l-1-18c-5-5-7-12-9-18z" fill="url(#fur)"/><path d="M28 9l3 0c1 6 4 12 7 17l-2 2c-6-5-8-12-10-17z" fill="#f0e2d2"/><path d="M54 33v13M57.500 34l-1.500 12M37.500 31l1 17M41.500 31l-.5 17" stroke="#f0cfc2" stroke-width="2.200"/><path d="M57 18c1-4 6-3 5 0 0 2-1 3-1 6" fill="none" stroke="#b96d42" stroke-width="2.400"/><path d="M20 10l6-4 1-5 2 4 2-4 0 6-1 4-4 3h-5l-2-1z" fill="#a09c98"/><path d="M20 10l3-1 1 3-3 1z" fill="#4d4a48"/></svg>
  </div>
  <div class="apps">
    <i><svg width="32" height="28" viewBox="0 0 32 28"><defs><linearGradient id="cp" x1="0" x2="1"><stop stop-color="#27a9e8"/><stop offset=".4" stop-color="#3d7ff0"/><stop offset=".6" stop-color="#b25be0"/><stop offset="1" stop-color="#f0703c"/></linearGradient></defs><path d="M10 0h10q3 0 4 4l1 3h3q5 0 3 6l-3 9q-2 6-7 6H11q-3 0-4-4l-1-3H4q-6 0-4-7l3-8Q5 0 10 0z" fill="url(#cp)"/><path d="M0 14l3-8q2-6 7-6h2l-4 16q-1 5-5 5-4-1-3-7z" fill="#2fb5c9"/><path d="M6 21q3 0 4-5l2 8q1 4-1 4-3 0-4-4z" fill="#e9c83b"/><path d="M14 8h5l-3 11h-4z" fill="#1f2527"/></svg></i>
    <i class="run"><svg width="28" height="24"><path d="M0 1q0-1 1-1h9l3 3h14v20H1q-1 0-1-1z" fill="#f0b429"/><path d="M1 6h27v17H1z" fill="#fbd568"/><path d="M5 23v-8q0-2 2-2h14q2 0 2 2v8h-5v-5h-8v5z" fill="#3f9fe6"/></svg></i>
    <i><svg width="30" height="30"><use href="#chrome"/></svg></i>
    <i class="run"><svg width="32" height="30"><svg width="30" height="30"><use href="#chrome"/></svg><circle cx="22" cy="21" r="9" fill="#6b2f25"/><ellipse cx="22" cy="20" rx="4" ry="5" fill="#c98a6c"/><path d="M15 27q7-5 14 0-7 6-14 0z" fill="#b0402c"/></svg></i>
    <i><svg width="28" height="28"><path d="M3 3q6-4 12 0v15q-6 4-12 0z" fill="#fcd116"/><path d="M3 3q6-4 12 0v15q-3 2-6 2V5z" fill="#fde06a"/><ellipse cx="9" cy="3" rx="6" ry="2.300" fill="#f0a04b"/><path d="M20 1.500h6.500V8M1.500 20v6.500H8" fill="none" stroke="#3fa648" stroke-width="3"/><path d="M14 26l8-8M16 17l8 9M11 17q3-3 6 0M21 14q0 4 5 4" fill="none" stroke="#9b4fc4" stroke-width="2.600"/></svg></i>
    <i class="run"><svg width="31" height="30"><path d="M22 0L0 18l3 4 19-14v14L3 8 0 11l22 19 8-4V4z" fill="#1480c8"/><path d="M22 0l8 4v22l-8 4z" fill="#2daaf0"/></svg></i>
    <i class="run act"><svg width="28" height="25" viewBox="0 0 20 20" preserveAspectRatio="none"><use href="#word"/></svg></i>
  </div>
  <div class="tray">
    <svg width="17" height="10"><path d="M1 9l7.500-7.500L16 9" fill="none" stroke="#fff" stroke-width="1.500"/></svg>
    <svg width="16" height="16"><path d="M1 15.500A14.500 14.500 0 0 1 15 1M5 15.500A10.500 10.500 0 0 1 15 5M9 15.500A6.500 6.500 0 0 1 15 9" fill="none" stroke="#ddd" stroke-width="1.300"/><circle cx="13.500" cy="14" r="1.800" fill="#fff"/></svg>
    <svg width="20" height="12"><path d="M.7.700h16.600v10.600H.7zM18.500 4v4" fill="none" stroke="#fff" stroke-width="1.400"/><path d="M2.500 2.500h12v7h-12z" fill="#fff"/></svg>
    <span>ENG</span>
    <div class="clock">15:40<br>09/12/2024</div>
    <svg width="32" height="32"><path d="M0 2h20v16H9l-4 4v-4H0z" fill="#fff"/><path d="M3 6.500h14M3 10h14M3 13.500h10" stroke="#1c2224" stroke-width="1.300"/><circle cx="19.500" cy="22" r="10" fill="#2a2f31" fill-opacity=".95" stroke="#888"/><text x="16" y="27.500" font-size="15" fill="#fff">1</text></svg>
  </div>
</footer>
</body>
</html>
```
FILE: styles.css
```css
* { box-sizing: border-box; margin: 0; padding: 0; letter-spacing: -.027em; }
body { width: 1920px; height: 1080px; overflow: hidden; background: #e4e4e4; font-family: "Noto Sans", "Open Sans", sans-serif; font-size: 14.400px; color: #262626; display: flex; flex-direction: column; position: relative; }
svg { display: block; overflow: visible; flex: none; }
.defs { position: absolute; }
i { font-style: normal; display: block; }
b { font-weight: 400; }
em { font-style: normal; }
u, s { text-decoration: none; }
.dd { color: #666; } .dark { color: #222; } .pale { color: #b8b8b8; } .flip { transform: scaleY(-1); }
.row { display: grid; align-items: center; }
.hl { background: #c2d5f2; height: 27px; display: flex; align-items: center; }
.sep { width: 1px; height: 22px; background: #ababab; }

/* title bar */
.titlebar { height: 29px; flex: none; display: flex; }
.quick { width: 164px; padding-left: 10px; display: grid; grid-template-columns: 35px 32px 24px 22px 32px 6px; align-items: center; height: 26px; }
.caption { width: 1590px; background: #ea100f; border-bottom: 1px solid #c00; color: #fff; text-align: center; line-height: 29px; position: relative; z-index: 1; font-size: 14.600px; letter-spacing: -.003em; }
.winctl { width: 166px; padding-left: 13px; height: 26px; display: grid; grid-template-columns: 29px 35px 33px 33px 12px; align-items: center; }
.winctl svg { position: relative; }
.winctl .pattern { position: absolute; left: 1370px; top: 0; }
.qm { font-size: 16px; font-weight: 700; fill: #777; }

/* ribbon tabs */
.tabs { height: 31px; flex: none; border-bottom: 1px solid #ababab; display: grid; grid-template-columns: 77px 85px 76px 81px 120px 114px 96px 81px 64px 947px 126px 13px 30px; line-height: 30px; font-size: 14.700px; position: relative; white-space: nowrap; }
.tabs span { letter-spacing: -.032em; }
.tabs .file { background: #2e2e2e; color: #fff; width: 73px; height: 31px; padding-left: 23px; }
.tabs .on { width: 70px; height: 31px; background: #f3f3f3; border: 1px solid #ababab; border-bottom: 0; color: #2b579a; padding-left: 12px; line-height: 29px; }
.tabs .dd { align-self: center; }
.tabs .acct { color: #444; letter-spacing: -.02em; line-height: 29px; }

/* ribbon */
.ribbon { height: 112px; flex: none; background: #f3f3f3; border-bottom: 1px solid #ababab; display: grid; grid-template-columns: 188px 303px 256px 843px 95px 157px 56px 22px; padding-top: 4px; white-space: nowrap; }
.grp { height: 103px; border-right: 1px solid #b0b0b0; display: flex; flex-direction: column; }
.body { height: 88px; flex: none; }
.lab { height: 20px; flex: none; line-height: 19px; font-size: 13px; text-align: center; position: relative; padding-right: 19px; letter-spacing: -.02em; }
.lab svg { position: absolute; right: 6px; top: 7px; color: #666; }
.g-edit .lab, .g-adobe .lab { padding-right: 0; }
.clip { display: grid; grid-template-columns: 58px 1fr; }
.paste { display: flex; flex-direction: column; align-items: center; padding-top: 4px; }
.paste > svg:first-child { margin-left: 5px; }
.paste b { line-height: 26px; }
.paste .dd { margin-top: 4px; }
.cmds { display: grid; grid-template-columns: 22px 1fr; grid-auto-rows: 28px; align-items: center; line-height: 26px; }
.g-font .body, .g-para .body { padding-top: 10px; display: flex; flex-direction: column; gap: 10px; }
.g-font .row, .g-para .row { height: 27px; }
.f1 { padding-left: 4px; grid-template-columns: 108px 60px 25px 23px 10px 22px 15px 12px 20px; }
.f2 { padding-left: 11px; grid-template-columns: 28px 23px 23px 13px 29px 26px 24px 10px 22px 14px 26px 13px 26px 10px; }
.p1 { padding-left: 8px; grid-template-columns: 25px 10px 43px 23px 15px 10px 25px 26px 11px 24px 11px 15px; }
.p2 { padding-left: 4px; grid-template-columns: 31px 27px 25px 25px 9px 23px 15px 8px 26px 14px 25px 10px; }
.combo { height: 27px; background: #fff; border: 1px solid #ababab; display: flex; justify-content: space-between; align-items: center; padding: 0 4px 2px 2px; color: #000; font-size: 14.700px; }
.combo span { letter-spacing: -.01em; }
.c1 { width: 109px; } .c2 { width: 52px; padding-left: 3px; }
.num { width: 39px; padding-left: 3px; gap: 7px; }
.al { width: 26px; padding-left: 6px; }
.ga { fill: #5a5a5a; font-weight: 600; } .light { font-weight: 400; }
.gb { fill: #505050; font-weight: 700; }
.gi { fill: #505050; font-family: "Liberation Serif", serif; font-style: italic; font-weight: 700; }
.gblue { fill: #3c77b5; font-weight: 700; } .gpurple { fill: #8b4fa8; font-weight: 600; }
.glow { fill: #fff; stroke: #3c77c5; stroke-width: 1.200px; filter: drop-shadow(0 0 1.500px #9cc3f2); }
.gallery { margin: 2px 0 0 5px; width: 830px; height: 75px; flex: none; border: 1px solid #ababab; background: #fff; display: grid; grid-template-columns: repeat(9, 90px) 19px; }
.gallery div { display: flex; flex-direction: column; align-items: center; color: #666; }
.gallery em { width: 75px; height: 36px; margin-top: 8px; overflow: hidden; color: #000; font-size: 14.500px; line-height: 36px; letter-spacing: 0; }
.gallery span { line-height: 26px; }
.gallery .s-n { letter-spacing: .007em; }
.gallery .s-b { font-size: 21.300px; line-height: 35px; letter-spacing: -.02em; }
.gallery .s-h1 { font-size: 22px; line-height: 35px; color: #2f5597; font-weight: 300; }
.gallery .s-h2 { font-size: 18.800px; line-height: 35px; color: #2f5597; font-weight: 300; }
.gallery .s-h4 { font-size: 21px; line-height: 35px; font-weight: 700; letter-spacing: -.035em; }
.gallery .s-h5 { color: #2f5597; font-weight: 300; letter-spacing: .02em; }
.gallery .s-t { font-size: 38px; line-height: 28px; font-weight: 300; }
.gallery .s-s { color: #5a5a5a; letter-spacing: .1em; font-size: 14px; }
.gallery .gscroll { display: grid; grid-template-rows: 25px 23px 25px; border-left: 1px solid #ababab; align-items: stretch; }
.gscroll i { display: flex; align-items: center; justify-content: center; }
.gscroll i + i { border-top: 1px solid #ababab; }
.g-styles { gap: 11px; }
.edit { padding-left: 7px; display: grid; grid-template-columns: 23px 53px 12px; grid-auto-rows: 27px; align-items: center; line-height: 25px; margin-top: -1px; margin-bottom: 1px; }
.edit .cur { margin-left: 5px; } .edit .mv { margin-left: -15px; } .edit .mv2 { margin-left: -9px; }
.adobe { display: flex; text-align: center; padding-left: 6px; }
.adobe div { display: flex; flex-direction: column; align-items: center; width: 44px; padding-top: 7px; }
.adobe div + div { width: 96px; margin-left: 5px; }
.adobe b { line-height: 20px; margin-top: 2px; letter-spacing: -.012em; }
.adobe div:first-child svg { margin-left: 12px; }
.adobe div + div svg { margin-left: 10px; }
.collapse { grid-column: 8; margin-top: 94px; }

/* ruler and page */
.work { height: 810px; flex: none; display: flex; }
.left { width: 1899px; }
.ruler { height: 30px; display: flex; position: relative; background: #e1e1e1; }
.corner { width: 28px; height: 27px; background: #c6c6c6; padding: 3px; }
.corner i { width: 22px; height: 21px; background: #fbfbfb; padding: 9px 0 0 8px; }
.strip { margin: 5px 0 0 1px; width: 1870px; height: 16px; overflow: hidden; display: flex; background: linear-gradient(90deg, #c6c6c6 182px, #e1e1e1 182px 184px, #fff 184px 1686px, #c6c6c6 1686px); }
.strip u { width: 0; margin-left: -53px; }
.strip s { width: 94.460px; flex: none; text-align: center; font-size: 12.500px; line-height: 17px; color: #444; background: linear-gradient(#444, #444) 0 6px / 1px 6px, linear-gradient(#444, #444) 23px 8px / 1px 2px, linear-gradient(#444, #444) 71px 8px / 1px 2px; background-repeat: no-repeat; }
.marks { position: absolute; left: 0; top: 0; }
.canvas { height: 780px; background: linear-gradient(#e1e1e1, #bcbcbc); padding-left: 30px; }
.page { background: #fff; height: 780px; padding: 19px 0 0 184px; }
.vscroll { width: 21px; background: #c0c0c0; padding: 3px 2px 0; display: grid; grid-template-rows: 17px 426px 18px 326px 17px; color: #666; }
.btn { background: #fff; display: flex; align-items: center; justify-content: center; }
.trk, .trk2 { background: #a2a2a2; margin-right: -1px; } .thumb { background: #fff; }
.hscroll { height: 21px; flex: none; background: #c0c0c0; border-top: 1px solid #a8a8a8; padding: 1px 0 1px 3px; display: grid; grid-template-columns: 17px 98px 1662px 99px 17px; }
.t1, .t2 { background: #a0a0a0; margin-left: 1px; }

/* embedded presentation window */
.ppt { width: 1503px; height: 738px; background: linear-gradient(118deg, #e8edf1 0%, #e6ebee 45%, #e9e8e8 60%, #eee6e1 82%, #eae5df 100%); color: #333; position: relative; display: flex; flex-direction: column; white-space: nowrap; }
.ptabs { height: 40px; padding-left: 26px; display: grid; grid-template-columns: 53px 66px 62px 58px 71px 97px 102px 98px 70px 70px 56px 54px 106px 385px 35px 81px; align-items: center; font-size: 15.200px; }
.ptabs > span { line-height: 26px; height: 28px; margin-top: 8px; letter-spacing: -.031em; position: relative; }
.ptabs .on { font-weight: 600; letter-spacing: -.04em; border-bottom: 3px solid #b7371b; width: 44px; line-height: 29px; }
.ptabs > span:first-child { border-bottom: 2px solid #c9cbce; margin-left: -12px; padding-left: 12px; width: 45px; line-height: 28px; }
.comment { width: 25px; height: 28px; background: #fff; border: 1px solid #aaa; border-radius: 4px; display: grid; place-items: center; margin-top: 4px; }
.share { height: 28px; background: #c43a18; color: #fff; border-radius: 4px; display: flex; align-items: center; gap: 6px; padding-left: 5px; font-size: 14.500px; margin-top: 4px; }
.share span { line-height: 26px; letter-spacing: 0; }
.pribbon { margin-left: 9px; width: 1486px; height: 117px; flex: none; background: #fff; border-radius: 9px; box-shadow: 0 1px 3px #9aa; display: grid; grid-template-columns: 122px 117px 367px 271px 232px 123px 129px 74px 51px; padding-top: 6px; font-size: 13.400px; }
.pg { height: 105px; border-right: 1px solid #ddd; }
.pbody { height: 90px; }
.plab { height: 20px; line-height: 20px; font-size: 12px; text-align: center; position: relative; letter-spacing: -.015em; }
.plab svg { position: absolute; right: 4px; top: 5px; color: #aaa; }
.plab .k { color: #222; right: 3px; }
.plab.sh { padding-right: 17px; }
.pg:first-child .plab { padding-right: 13px; }
.big { text-align: center; line-height: 18px; display: flex; flex-direction: column; align-items: center; letter-spacing: 0; }
.big i { height: 43px; padding-bottom: 0; display: grid; place-items: center; }
.big .off { margin-left: 9px; }
.big b svg { display: inline-block; vertical-align: 3px; }
.big b, .pedit span { letter-spacing: -.008em; }
.big > svg { margin-top: 6px; }
.soft { color: #a6a6a6; }
.big.soft { color: #b0b0b0; }
.rows { display: grid; grid-template-columns: 29px 1fr; grid-auto-rows: 30px; align-items: center; }
.pclip { display: grid; grid-template-columns: 61px 52px; padding-left: 9px; }
.pclip .rows { margin-top: -1px; }
.pslides { display: grid; grid-template-columns: 50px 1fr; padding-left: 8px; }
.pslides .rows { margin: -1px 0 0 7px; grid-template-columns: 26px 1fr; }
.pf1 { padding: 8px 0 0 9px; grid-template-columns: 200px 62px 32px 23px 8px 20px; height: 37px; }
.pf2 { padding-left: 19px; grid-template-columns: 32px 27px 32px 26px 30px 26px 24px 25px 20px 7px 29px 19px 28px 10px; height: 30px; margin-top: 8px; }
.pc { height: 29px; width: 198px; background: #eee; border: 1px solid #e4e4e4; border-radius: 5px; display: flex; justify-content: flex-end; align-items: center; padding-right: 3px; }
.w53 { width: 53px; }
.psep { width: 1px; height: 28px; background: #ddd; }
.pa { fill: #a0a0a0; } .pi { fill: #a0a0a0; font-weight: 400; }
.ln { fill: none; stroke: #aaa; stroke-width: 1.500px; }
.ppara { display: grid; grid-template-columns: 219px 52px; }
.ppara .rows { grid-template-columns: 26px 1fr; margin-top: -1px; }
.pp1 { padding: 8px 0 0 13px; grid-template-columns: 28px 20px 28px 21px 30px 30px 26px 23px; height: 37px; }
.pp2 { padding-left: 14px; grid-template-columns: 31px 30px 31px 25px 10px 23px 8px; height: 30px; margin-top: 8px; }
.pdraw { display: grid; grid-template-columns: 47px 64px 50px 1fr; padding-left: 11px; }
.pdraw .rows { margin: -1px 0 0 8px; }
.pdraw .big + .big.soft { margin-left: -8px; padding-left: 6px; width: 58px; }
.pedit { padding-left: 14px; display: grid; grid-template-columns: 24px 1fr 12px; grid-auto-rows: 30px; align-items: center; line-height: 28px; position: relative; top: -1px; }
.pedit .m1 { margin-left: -11px; } .pedit .m2 { margin-left: -31px; }
.pcollapse { margin: 96px 0 0 25px; }
.pmain { height: 555px; flex: none; display: grid; grid-template-columns: 228px 1275px; }
.thumbs { border-right: 1px solid #d6d9dc; padding: 20px 0 0 12px; display: grid; grid-template-rows: repeat(4, 114.400px); height: 554px; }
.tn { display: grid; grid-template-columns: 29px 1fr; color: #555; }
.tn p { font-size: 18px; line-height: 17px; padding-left: 2px; }
.tn p svg { margin: 3px 0 0 -3px; }
.tn .th { margin-top: 2px; }
.tn.cur p { color: #cf4520; } .tn.cur .th { margin: 0 0 0 -3px; }
.tinyserif { font-family: "Liberation Serif", serif; font-size: 3.600px; fill: #111; letter-spacing: 0; }
.tiny { font-size: 2.700px; fill: #222; } .wh { fill: #fff; font-weight: 700; }
.tiny text { letter-spacing: -.05em; }
.stage { display: flex; flex-direction: column; }
.slidewrap { height: 518px; border-bottom: 1px solid #d3d3d3; padding: 10px 0 0 189px; display: grid; grid-template-columns: 1068px 18px; }
.slide { width: 880px; height: 495px; background: #fff; border: 1px solid #cfcfd2; display: grid; grid-template-columns: 659px 210px; column-gap: 9px; padding-top: 55px; align-content: start; }
.teal { height: 384px; background: #40b8d3; }
.grey { height: 384px; background: #e3e3e3; }
h1 { font-weight: 400; font-size: 42.500px; line-height: 57px; color: #fff; text-align: right; padding: 29px 24px 0 0; height: 96px; letter-spacing: -.012em; word-spacing: -.1em; }
.card { width: 260px; height: 62px; border: 1px solid #27434d; border-radius: 11px; background: #fff; margin-bottom: 15px; text-align: center; color: #111; font: 400 21.900px/69px "Liberation Serif", serif; -webkit-text-stroke: .5px #111; letter-spacing: 0; padding-top: 1px; }
.card.dk + .card.sm { margin-top: 17px; }
.card.sm { border-color: #3c7482; font-size: 15.800px; line-height: 28px; height: 63px; padding-top: 6px; margin-bottom: 16px; -webkit-text-stroke-width: .35px; }
.card.last { height: 65px; padding-top: 7px; }
q { quotes: none; letter-spacing: inherit; text-decoration: underline wavy #e66 .6px; text-underline-offset: 1px; }
.card u { text-decoration: underline; text-underline-offset: 3px; letter-spacing: inherit; }
.vs { margin-top: -8px; }
.notes { padding-left: 13px; line-height: 35px; font-size: 16.800px; color: #666; display: flex; justify-content: space-between; letter-spacing: -.017em; height: 37px; }
.pstatus { height: 26px; flex: none; background: #f4f4f4; display: grid; padding-left: 14px; grid-template-columns: 97px 120px 21px 761px 21px 54px 62px 47px 46px 39px 160px 39px 18px; align-items: center; font-size: 12.200px; line-height: 24px; }
.pstatus > span, .pstatus > b { padding-top: 2px; letter-spacing: -.02em; }
.pstatus b { font-weight: 700; }
.pstatus .view { width: 46px; height: 26px; background: #e0e0e0; display: grid; place-items: center; }
.pointer { position: absolute; left: 54px; top: 38px; }

/* status bar */
.status { height: 27px; flex: none; background: #333; color: #f0f0f0; font-size: 12.600px; line-height: 26px; padding-left: 8px; display: grid; grid-template-columns: 105px 121px 1360px 28px 54px 33px 170px 40px; align-items: center; white-space: nowrap; }
.status span { letter-spacing: -.012em; }
.status .view { width: 41px; height: 27px; background: #000; display: grid; place-items: center; }

/* taskbar */
.taskbar { height: 50px; flex: none; background: #1c2224; color: #fff; display: flex; align-items: center; padding-left: 20px; position: relative; }
.search { margin-left: 20px; width: 360px; height: 50px; background: #323232; border: 1px solid #666; display: grid; grid-template-columns: 35px 214px 96px; padding-left: 14px; align-items: center; }
.search span { font-size: 18px; color: #ddd; letter-spacing: -.018em; padding-bottom: 2px; }
.apps { display: flex; margin-left: 731px; height: 50px; gap: 1px; }
.apps i { width: 61.100px; height: 50px; display: grid; place-items: center; border-bottom: 3px solid transparent; padding-top: 1px; }
.apps .run { background: linear-gradient(#b9afab, #b9afab) 50% 47px / 51px 3px no-repeat; background-origin: border-box; background-clip: border-box; }
.apps .act { background: #4b4f51; border-bottom-color: #b9afab; }
.tray { margin-left: 50px; display: grid; grid-template-columns: 31px 28px 32px 41px 85px 56px; align-items: center; height: 50px; width: 281px; font-size: 14.400px; }
.clock { text-align: center; line-height: 23.500px; margin-left: -3px; }
.tray > svg:last-child { margin: 5px 0 0 18px; }
```
